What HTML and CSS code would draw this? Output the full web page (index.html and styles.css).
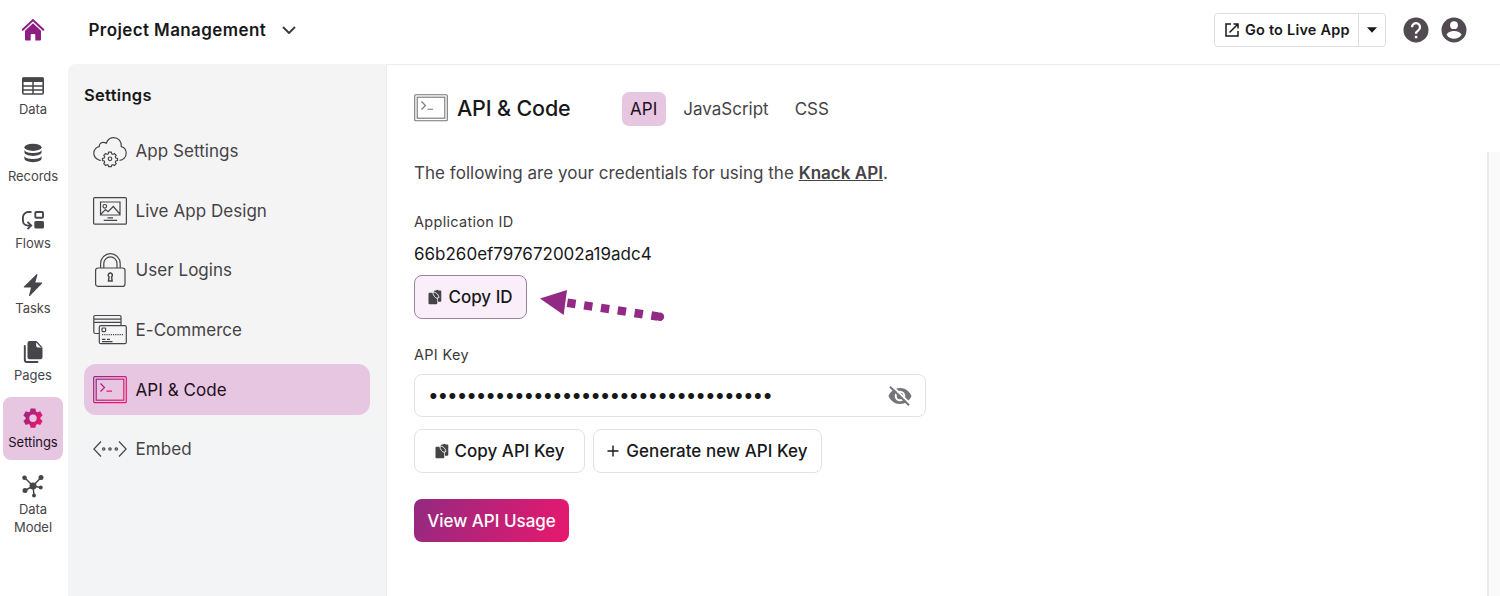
FILE: index.html
```
<!DOCTYPE html>
<html lang="en">
<head>
    <meta charset="UTF-8">
    <meta name="viewport" content="width=device-width, initial-scale=1.0">
    <title>Project Management - API &amp; Code</title>
    <link rel="stylesheet" href="styles.css">
</head>
<body>
    <!-- shared gradient and icons used more than once -->
    <svg class="defs" width="0" height="0">
        <defs>
            <linearGradient id="brand" x1="0" y1="0" x2="1" y2="0.6">
                <stop offset="0" stop-color="#932782"/>
                <stop offset="1" stop-color="#e6196f"/>
            </linearGradient>
            <symbol id="icon-code" viewBox="0 0 34 28">
                <rect x="0.7" y="0.7" width="32.6" height="26" rx="1"/>
                <rect x="3.2" y="3.2" width="27.6" height="21" />
                <path d="M7.5 7.5l4 4-4 4M13.5 15.2h5.5"/>
            </symbol>
            <symbol id="icon-copy" viewBox="0 0 14 16">
                <path d="M5 3.500L6.500 1.500h1.500a1.500 1.500 0 0 1 2.600 0h1.700a1 1 0 0 1 1 1v9.300a1 1 0 0 1-1 1H10V9z"/>
                <path d="M1.500 3.800H5L9.300 9v5.200a1 1 0 0 1-1 1H1.500a1 1 0 0 1-1-1V4.800a1 1 0 0 1 1-1z"/>
                <path d="M4.800 3.300c2.500-.8 5.500 1.700 6.200 5.200L9 9.300C7.500 9.200 5 6.500 4.800 3.300z" class="fold"/>
            </symbol>
        </defs>
    </svg>

    <header>
        <div class="home">
            <svg width="24" height="24" viewBox="0 0 24 24">
                <path d="M1.700 11.700L12 2l10.300 9.700" fill="none" stroke="#8d1d82" stroke-width="2" stroke-linecap="round"/>
                <path d="M12 5.200l8 7.600V21.500a1 1 0 0 1-1 1h-4.700v-5.500a1 1 0 0 0-1-1h-2.600a1 1 0 0 0-1 1v5.500H5a1 1 0 0 1-1-1v-8.700z" fill="#8d1d82"/>
            </svg>
        </div>
        <div class="app-name">
            <span>Project Management</span>
            <svg width="14" height="9" viewBox="0 0 14 9"><path d="M1.500 1.500L7 7l5.500-5.500" fill="none" stroke="#3c3c40" stroke-width="1.900" stroke-linecap="round" stroke-linejoin="round"/></svg>
        </div>
        <div class="header-actions">
            <div class="live-app">
                <button class="live-btn">
                    <svg width="14" height="14" viewBox="0 0 14 14"><path d="M6 1H1v12h12V8M8.500 1H13v4.500M13 1L4.500 9.500" fill="none" stroke="#18181b" stroke-width="1.500"/></svg>
                    Go to Live App
                </button>
                <button class="live-more">
                    <svg width="10" height="6" viewBox="0 0 10 6"><path d="M0 .3h10L5 5.700z" fill="#18181b"/></svg>
                </button>
            </div>
            <svg class="help" width="26" height="26" viewBox="0 0 26 26">
                <circle cx="13" cy="13" r="12.500" fill="#514a51"/>
                <path d="M9 10.200a4 4 0 1 1 6.300 3.200c-1.500 1-2.300 1.800-2.300 3.400" fill="none" stroke="#fff" stroke-width="2.300"/>
                <rect x="11.800" y="18.800" width="2.500" height="2.500" fill="#fff"/>
            </svg>
            <svg class="account" width="26" height="26" viewBox="0 0 26 26">
                <circle cx="13" cy="13" r="12.500" fill="#514a51"/>
                <circle cx="13" cy="8.200" r="3.900" fill="#fff"/>
                <path d="M5.500 17.800c.6-2.700 4.800-3.900 7.500-3.900s6.900 1.200 7.500 3.900a9 9 0 0 1-15 0z" fill="#fff"/>
            </svg>
        </div>
    </header>

    <div class="layout">
        <nav class="rail">
            <a href="#" class="rail-item">
                <svg width="24" height="24" viewBox="0 0 24 24"><rect x="1.800" y="4" width="20.400" height="16" rx="1" fill="none" stroke="#48454a" stroke-width="1.600"/><path d="M1.500 3.500h21V8h-21z" fill="#48454a"/><path d="M2 12h20M2 16h20M12 7v13" stroke="#48454a" stroke-width="1.500"/></svg>
                Data
            </a>
            <a href="#" class="rail-item">
                <svg width="24" height="24" viewBox="0 0 24 24"><ellipse cx="12" cy="6.300" rx="8.600" ry="3.600"/><path d="M3.400 9c1 2.200 4.700 3 8.600 3s7.600-.8 8.600-3v2.300c0 2-3.800 3.600-8.600 3.600s-8.600-1.600-8.600-3.600zM3.400 15c1 2.200 4.700 3 8.600 3s7.600-.8 8.600-3v2.600c0 2-3.800 3.600-8.600 3.600s-8.600-1.600-8.600-3.600z"/></svg>
                Records
            </a>
            <a href="#" class="rail-item flows">
                <svg width="24" height="24" viewBox="0 0 24 24"><g fill="none" stroke="#48454a" stroke-width="1.900"><path d="M10.500 4H7.500a5.600 5.600 0 0 0-5.600 5.600v3a5 5 0 0 0 5 5H9"/><path d="M6.500 13.800l3.700 3.700-3.700 3.700"/><rect x="14.300" y="4" width="7.700" height="5.700" rx="1"/></g><rect x="13.300" y="13" width="9.700" height="7.500" rx="1.500"/></svg>
                Flows
            </a>
            <a href="#" class="rail-item tasks">
                <svg width="24" height="24" viewBox="0 0 24 24"><path d="M15.500 1.300L3 13.600a.5.500 0 0 0 .4.900H10L8 22.500c-.1.600.4.800.8.400L21 10.400a.5.500 0 0 0-.4-.9H14.300L16.400 1.900c.1-.7-.4-1-.9-.6z"/></svg>
                Tasks
            </a>
            <a href="#" class="rail-item">
                <svg width="24" height="24" viewBox="0 0 24 24"><path d="M8.500 1h6.700v4.800a1.800 1.800 0 0 0 1.800 1.800h4.500v9.600a2 2 0 0 1-2 2h-11a2 2 0 0 1-2-2V3a2 2 0 0 1 2-2z"/><path d="M14 1.900h1.600l5 5.500" fill="none" stroke="#48454a" stroke-width="1.400"/><path d="M3.800 6v14a2 2 0 0 0 2 2h10.700" fill="none" stroke="#48454a" stroke-width="1.900" stroke-linecap="round"/></svg>
                Pages
            </a>
            <a href="#" class="rail-item active">
                <svg width="24" height="24" viewBox="0 0 24 24"><path fill="url(#brand)" fill-rule="evenodd" d="M9.600 2.600h4.800l.6 2.900 1.400.8 2.800-1 2.400 4.200-2.200 1.900v1.600l2.200 1.900-2.400 4.200-2.800-1-1.400.8-.6 2.900H9.600L9 18.900l-1.400-.8-2.800 1-2.400-4.200L4.600 13v-1.600L2.400 9.500l2.400-4.200 2.800 1L9 5.500zM12 8.500a3.700 3.700 0 1 0 0 7.400 3.700 3.700 0 0 0 0-7.400z"/></svg>
                Settings
            </a>
            <a href="#" class="rail-item">
                <svg width="24" height="24" viewBox="0 0 24 24"><path d="M3.500 3.500L12 12l8-8.500M4 16.500l8-4.500 7.500 1.500M12 12l1 9.500" stroke="#48454a" stroke-width="1.500" fill="none"/><circle cx="12" cy="12" r="3.500"/><circle cx="3.500" cy="3.700" r="2.300"/><circle cx="20" cy="3.500" r="2.500"/><circle cx="4" cy="16.500" r="2.500"/><circle cx="19.700" cy="13.500" r="2"/><circle cx="13" cy="21.500" r="2"/></svg>
                Data<br>Model
            </a>
        </nav>

        <aside class="sidebar">
            <h2>Settings</h2>
            <ul class="menu">
                <li><a href="#">
                    <svg width="34" height="34" viewBox="0 0 34 34"><path d="M7.700 26.300H6.500C3 25 .8 22.300.8 19.300c0-3.800 2.800-6.500 5.400-6.700 0-2.600 2-4.300 4.200-4.300 1.300 0 2.200.4 2.900 1C14.500 6 17.300 3.700 20.700 3.700c4.700 0 8 3.700 7.600 8.900 3 .7 4.900 3.300 4.900 6.500 0 4-2.800 7.200-6.700 7.200"/><circle cx="17" cy="24.800" r="1.800"/><path d="M15.700 18.200h2.600l.4 1.700 1.200.5 1.500-.9 1.800 1.800-.9 1.500.5 1.200 1.700.4v2.200l-1.700.4-.5 1.200.9 1.500-1.800 1.800-1.500-.9-1.200.5-.4 1.600h-2.600l-.4-1.600-1.200-.5-1.500.9-1.800-1.800.9-1.500-.5-1.200-1.700-.4v-2.200l1.700-.4.5-1.200-.9-1.500 1.800-1.800 1.500.9 1.200-.5z"/></svg>
                    App Settings</a></li>
                <li><a href="#">
                    <svg width="34" height="34" viewBox="0 0 34 34"><rect x=".6" y="3.600" width="32.800" height="26.600" rx="1"/><path d="M7.500 8h19.500v13H7.500zM8 20l4.500-4.500 2.500 2.200 5.300-5.200 6.500 7.500M14.500 23.800h5.500M10.700 26.400h13.500"/><circle cx="11.800" cy="12.300" r="1.800"/></svg>
                    Live App Design</a></li>
                <li><a href="#">
                    <svg width="34" height="34" viewBox="0 0 34 34"><rect x="2.600" y="15" width="29.400" height="18.400" rx="2.500"/><path d="M7.600 15V10.500a9.800 9.800 0 0 1 19.600 0V15M10.800 15v-4.500a6.600 6.600 0 0 1 13.200 0V15"/><path d="M16 23.800a2.100 2.100 0 1 1 2.600 0l.5 4.200h-3.600z" stroke-width="1.500"/></svg>
                    User Logins</a></li>
                <li><a href="#">
                    <svg width="34" height="34" viewBox="0 0 34 34"><path d="M6 20.500H2.600a1.800 1.800 0 0 1-1.800-1.800V3.800a1.300 1.300 0 0 1 1.300-1.300h24.600A1.300 1.300 0 0 1 28 3.800V12M1 6.200h27M1 9.300h27"/><rect x="6.300" y="12.700" width="27" height="18" rx="1.500"/><rect x="9" y="15" width="3.600" height="3.600" rx=".8"/><path d="M9 21.700h22" stroke-dasharray="1.200 1"/><path d="M9 26.400h3.500M14 26.400h3M9 28.700h10.500"/></svg>
                    E-Commerce</a></li>
                <li><a href="#" class="active">
                    <svg width="34" height="28" stroke="url(#brand)"><use href="#icon-code"/></svg>
                    API &amp; Code</a></li>
                <li><a href="#">
                    <svg width="34" height="34" viewBox="0 0 34 34"><path d="M8 9.500L.9 17 8 24.500M26 9.500l7.100 7.500-7.100 7.500"/><circle cx="10.700" cy="17" r="1.200"/><circle cx="17" cy="17" r="1.200"/><circle cx="23.300" cy="17" r="1.200"/></svg>
                    Embed</a></li>
            </ul>
        </aside>

        <main>
            <div class="page-head">
                <svg class="title-icon" width="34" height="28"><use href="#icon-code"/></svg>
                <h1>API &amp; Code</h1>
                <div class="tabs">
                    <a href="#" class="active">API</a>
                    <a href="#">JavaScript</a>
                    <a href="#">CSS</a>
                </div>
            </div>
            <div class="page-scroll">
                <div class="page-body">
                    <p class="intro">The following are your credentials for using the <a href="#">Knack API</a>.</p>

                    <label class="id-label">Application ID</label>
                    <p class="app-id">66b260ef797672002a19adc4</p>
                    <div class="id-row">
                        <button class="btn btn-copy-id"><svg width="14" height="16"><use href="#icon-copy"/></svg>Copy ID</button>
                        <svg class="arrow" width="126" height="36" viewBox="0 0 126 36">
                            <path d="M0 12.500L27 4l-3.300 25z"/>
                            <path d="M27.300 16.800L118 30.500" fill="none" stroke="#922a85" stroke-width="8.500" stroke-dasharray="8.400 8.600"/>
                            <circle cx="120" cy="30.800" r="4.200"/>
                        </svg>
                    </div>

                    <label class="key-label">API Key</label>
                    <div class="key-field">
                        <span class="dots">••••••••••••••••••••••••••••••••••••</span>
                        <svg width="24" height="22" viewBox="0 0 24 22"><path fill-rule="evenodd" d="M12 3c5.400 0 9.500 3.300 11.500 8-2 4.700-6.100 8-11.500 8S2.500 15.700.5 11C2.500 6.300 6.600 3 12 3zm0 2.700a5.300 5.300 0 1 0 0 10.600 5.300 5.300 0 0 0 0-10.600zM12 7.700a3.300 3.300 0 1 1 0 6.600 3.300 3.300 0 0 1 0-6.600z" fill="#77737a"/><path d="M4 .8L23 19.500" stroke="#fff" stroke-width="2"/><path d="M2 1.700l19 18.600" stroke="#77737a" stroke-width="1.900"/></svg>
                    </div>
                    <div class="key-actions">
                        <button class="btn btn-copy-key"><svg width="14" height="16"><use href="#icon-copy"/></svg>Copy API Key</button>
                        <button class="btn btn-generate"><svg width="12" height="12" viewBox="0 0 12 12"><path d="M6 .5v11M.5 6h11" stroke="#18181b" stroke-width="1.400"/></svg>Generate new API Key</button>
                    </div>
                    <button class="btn-usage">View API Usage</button>
                </div>
            </div>
        </main>
    </div>
</body>
</html>
```
FILE: styles.css
```
* {
    box-sizing: border-box;
}

body {
    font-family: Inter, "Liberation Sans", sans-serif;
    margin: 0;
    height: 596px;
    display: flex;
    flex-direction: column;
    overflow: hidden;
    color: #18181b;
    background-color: #fff;
}

a {
    color: inherit;
    text-decoration: none;
}

button {
    font-family: inherit;
    color: inherit;
    background-color: #fff;
    cursor: pointer;
    padding: 0;
}

svg {
    flex: none;
}

.defs {
    position: absolute;
}

header {
    height: 64px;
    flex: none;
    display: flex;
    align-items: center;
    padding-bottom: 4px;
}

.home {
    width: 66px;
    display: flex;
    justify-content: center;
}

.app-name {
    display: flex;
    align-items: center;
    gap: 16px;
    margin-left: 22.500px;
    font-size: 17px;
    font-weight: 600;
    letter-spacing: 0.4px;
}

.header-actions {
    margin-left: auto;
    display: flex;
    align-items: center;
    padding-right: 33px;
}

.live-app {
    display: flex;
    width: 172px;
    height: 34px;
    border: 1px solid #dedde0;
    border-radius: 4px;
    margin-right: 17px;
}

.live-btn {
    display: flex;
    align-items: center;
    gap: 6px;
    width: 144px;
    padding: 0 0 1px 10px;
    border: none;
    border-right: 1px solid #dedde0;
    border-radius: 4px 0 0 4px;
    font-size: 14.500px;
    font-weight: 600;
    letter-spacing: 0.2px;
    white-space: nowrap;
}

.live-more {
    flex: 1;
    display: flex;
    align-items: center;
    justify-content: center;
    border: none;
    border-radius: 4px;
}

.help {
    margin-right: 12px;
}

.layout {
    flex: 1;
    display: flex;
    min-height: 0;
}

/* Left icon rail */
.rail {
    width: 68px;
    flex: none;
    display: flex;
    flex-direction: column;
    gap: 3.600px;
    padding: 0 5px 0 3px;
}

.rail-item {
    height: 63px;
    flex: none;
    display: flex;
    flex-direction: column;
    align-items: center;
    padding-top: 10px;
    border-radius: 8px;
    font-size: 13px;
    line-height: 18px;
    letter-spacing: -0.050px;
    text-align: center;
    color: #48454a;
    fill: #48454a;
}

.rail-item.flows {
    padding-top: 11px;
}

.rail-item.tasks {
    padding-top: 9px;
}

.rail-item svg {
    margin-bottom: 2px;
}

.rail-item.active {
    background-color: #e7c6e2;
    color: #210f20;
}

.rail-item.active svg {
    margin-top: -1px;
    margin-bottom: 3px;
}

/* Settings menu */
.sidebar {
    width: 318px;
    flex: none;
    padding: 20px 16px;
    background: linear-gradient(#f4f4f4 60%, #f2f4f6 90%);
    border-radius: 8px 0 0 0;
}

.sidebar h2 {
    margin: 0 0 19.400px;
    font-size: 16.500px;
    font-weight: 600;
    line-height: 22px;
    letter-spacing: 0.3px;
}

.menu {
    list-style: none;
    margin: 0;
    padding: 0;
    display: flex;
    flex-direction: column;
    gap: 8.700px;
}

.menu a {
    display: flex;
    align-items: center;
    gap: 9px;
    height: 51px;
    padding-left: 8.500px;
    border-radius: 12px;
    font-size: 17px;
    letter-spacing: 0.050px;
    color: #454346;
}

.menu svg {
    fill: none;
    stroke-width: 1.200;
}

.menu a:not(.active) svg {
    stroke: #48454a;
}

.menu a.active {
    background-color: #e7c6e2;
    color: #210f20;
}

/* Content */
main {
    flex: 1;
    min-width: 0;
    display: flex;
    flex-direction: column;
    border-top: 1px solid #ededee;
    border-left: 1px solid #eeeeef;
}

.page-head {
    height: 87px;
    flex: none;
    display: flex;
    align-items: center;
    padding-left: 27px;
}

.title-icon {
    fill: none;
    stroke: #77747a;
    stroke-width: 1.100;
    margin-bottom: 1px;
}

h1 {
    margin: 0 51px 1px 9px;
    font-size: 21.500px;
    font-weight: 500;
    letter-spacing: -0.150px;
}

.tabs {
    display: flex;
    gap: 9px;
    font-size: 17px;
    color: #454346;
}

.tabs a {
    height: 34px;
    padding: 0 8.500px;
    line-height: 34px;
    border-radius: 7px;
}

.tabs a.active {
    background-color: #e7c6e2;
    color: #210f20;
}

.page-scroll {
    flex: 1;
    display: flex;
    background-color: #fafafa;
}

.page-body {
    width: 1102px;
    padding: 9px 27px 0;
    background-color: #fff;
    border-right: 2px solid #ebebec;
    display: flex;
    flex-direction: column;
    align-items: flex-start;
}

.page-body p {
    margin: 0;
}

.page-body label {
    font-size: 14.500px;
    line-height: 20px;
    letter-spacing: 0.3px;
    font-weight: 400;
    color: #3b393c;
}

.intro {
    font-size: 17px;
    line-height: 24px;
    letter-spacing: 0.030px;
    color: #454346;
}

.intro a {
    font-weight: 600;
    text-decoration: underline;
}

.id-label {
    margin-top: 27px;
}

.app-id {
    font-size: 17px;
    line-height: 24px;
    padding-top: 10px;
}

.btn {
    height: 44px;
    display: flex;
    align-items: center;
    justify-content: center;
    gap: 6px;
    border: 1px solid #e2e2e4;
    border-radius: 8px;
    font-size: 17px;
    font-weight: 500;
    white-space: nowrap;
    fill: #454346;
}

.fold {
    fill: #454346;
    stroke: #fff;
    stroke-width: 0.900;
}

.id-row {
    display: flex;
    gap: 13px;
    margin-top: 9px;
}

.btn-copy-id {
    width: 113px;
    background-color: #fbeefb;
    border-color: #98839a;
}

.arrow {
    margin-top: 11px;
    fill: #922a85;
}

.key-label {
    margin-top: 23px;
}

.key-field {
    width: 512px;
    height: 43px;
    margin-top: 9px;
    padding: 0 13px;
    display: flex;
    align-items: center;
    justify-content: space-between;
    border: 1px solid #e2e2e4;
    border-radius: 8px;
}

.dots {
    font-size: 19px;
    line-height: 24px;
    letter-spacing: -1.140px;
}

.key-actions {
    display: flex;
    gap: 8px;
    margin-top: 12px;
}

.btn-copy-key {
    width: 171px;
}

.btn-generate {
    width: 229px;
    gap: 7px;
    letter-spacing: 0.050px;
}

.btn-usage {
    width: 155px;
    height: 43px;
    margin-top: 26px;
    border: none;
    border-radius: 8px;
    font-size: 17px;
    font-weight: 500;
    color: #fff;
    background: linear-gradient(110deg, #932a80, #e8186e);
}
```
